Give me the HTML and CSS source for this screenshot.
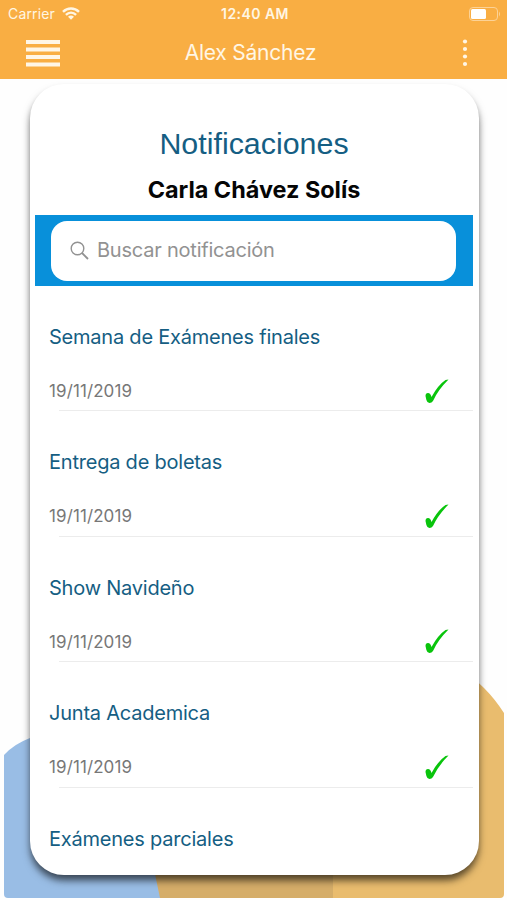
FILE: index.html
```
<!DOCTYPE html>
<html lang="es">
<head>
<meta charset="utf-8">
<title>Notificaciones</title>
<link rel="stylesheet" href="styles.css">
</head>
<body>
<header class="header">
  <div class="status">
    <div class="carrier"><span>Carrier</span>
      <svg class="wifi" width="18" height="13" viewBox="0 0 18 13" fill="none" stroke="#fff6e4" stroke-width="2.4"><path d="M1 4.800C5.500.3 12.500.3 17 4.800M3.900 7.900C6.900 5 11.100 5 14.100 7.900"/><path d="M6 9.800Q9 7.200 12 9.800L9 12.800Z" fill="#fff6e4" stroke="none"/></svg>
    </div>
    <span class="clock">12:40 AM</span>
    <svg class="battery" width="32" height="14" viewBox="0 0 32 14"><rect x=".5" y=".5" width="28" height="13" rx="3.500" fill="none" stroke="#fcd296"/><rect x="2" y="2" width="15" height="10" rx="1.500" fill="#fff"/><path d="M30 4.500Q32 7 30 9.500Z" fill="#fcd296"/></svg>
  </div>
  <nav class="nav">
    <svg class="menu" width="34" height="27" viewBox="0 0 34 27" fill="#fff6e6"><path d="M0 0h34v4H0zM0 7.500h34v4H0zM0 15h34v4H0zM0 22.500h34v4H0z"/></svg>
    <span class="user">Alex Sánchez</span>
    <svg class="more" width="6" height="28" viewBox="0 0 6 28" fill="#fff6e6"><circle cx="3" cy="2.500" r="2.100"/><circle cx="3" cy="10" r="2.100"/><circle cx="3" cy="17.500" r="2.100"/><circle cx="3" cy="25" r="2.100"/></svg>
  </nav>
</header>
<main class="page">
  <svg class="backdrop" width="507" height="821" viewBox="0 79 507 821"><path d="M4 755Q14 744 30 738L160 710V898H8Q4 898 4 894Z" fill="#99bde5"/><path d="M150 850L160 898H340V850Z" fill="#d5ad69"/><path d="M333 850H460V669Q486 685 504 713V894Q504 898 500 898H333Z" fill="#e9bc6e"/></svg>
  <section class="card">
    <h1 class="title">Notificaciones</h1>
    <h2 class="student">Carla Chávez Solís</h2>
    <div class="search">
      <div class="field"><svg class="glass" width="19" height="19" viewBox="0 0 19 19" fill="none" stroke="#929292" stroke-width="1.400"><circle cx="7.500" cy="7.500" r="6.300"/><path d="M12 12L18 18" stroke-width="1.800"/></svg><span class="hint">Buscar notificación</span></div>
    </div>
    <ul class="list">
      <li class="item"><span class="subject">Semana de Exámenes finales</span><div class="meta"><span>19/11/2019</span><svg class="check" width="24" height="25" viewBox="0 0 24 25"><path d="M.5 17Q.5 14 3 14Q5.500 14 6.500 18Q13 6 20.500 1L23.500.6Q13 11 8 22Q6.800 24 4.400 24Q2.200 24 1.400 21Z" fill="#09c40c"/></svg></div></li>
      <li class="item"><span class="subject">Entrega de boletas</span><div class="meta"><span>19/11/2019</span><svg class="check" width="24" height="25" viewBox="0 0 24 25"><path d="M.5 17Q.5 14 3 14Q5.500 14 6.500 18Q13 6 20.500 1L23.500.6Q13 11 8 22Q6.800 24 4.400 24Q2.200 24 1.400 21Z" fill="#09c40c"/></svg></div></li>
      <li class="item"><span class="subject">Show Navideño</span><div class="meta"><span>19/11/2019</span><svg class="check" width="24" height="25" viewBox="0 0 24 25"><path d="M.5 17Q.5 14 3 14Q5.500 14 6.500 18Q13 6 20.500 1L23.500.6Q13 11 8 22Q6.800 24 4.400 24Q2.200 24 1.400 21Z" fill="#09c40c"/></svg></div></li>
      <li class="item"><span class="subject">Junta Academica</span><div class="meta"><span>19/11/2019</span><svg class="check" width="24" height="25" viewBox="0 0 24 25"><path d="M.5 17Q.5 14 3 14Q5.500 14 6.500 18Q13 6 20.500 1L23.500.6Q13 11 8 22Q6.800 24 4.400 24Q2.200 24 1.400 21Z" fill="#09c40c"/></svg></div></li>
      <li class="item last"><span class="subject">Exámenes parciales</span></li>
    </ul>
  </section>
</main>
</body>
</html>
```

FILE: styles.css
```
* { box-sizing: border-box; }
body { margin: 0; height: 900px; overflow: hidden; background: #fefefe; font-family: Inter, "Liberation Sans", sans-serif; }
svg { display: block; flex: none; }
.header { height: 79px; background: #f9ae43; color: #fff6e4; }
.status { height: 27px; display: grid; grid-template-columns: 1fr auto 1fr; align-items: center; padding: 0 6px 0 8px; font-size: 14px; }
.carrier { display: flex; gap: 7px; align-items: center; letter-spacing: .15px; }
.clock { font-weight: 600; font-size: 14px; letter-spacing: .45px; padding-left: 1px; }
.battery { justify-self: end; }
.nav { height: 52px; display: grid; grid-template-columns: 1fr auto 1fr; align-items: center; padding: 0 39px 0 26px; }
.user { font-size: 21px; letter-spacing: -.22px; padding-left: 7px; margin-top: -2px; }
.more { justify-self: end; }
.page { position: relative; height: 821px; padding: 5px 28px 25px 30px; }
.backdrop { position: absolute; left: 0; top: 0; }
.card { position: relative; height: 791px; overflow: hidden; border-radius: 34px; background: #fff; box-shadow: 0 6px 8px -1px rgba(0,0,0,.6), 0 5px 5px rgba(0,0,0,.12); padding: 41px 6px 0 5px; }
.title { margin: 0; height: 36px; text-align: center; font: 400 30.4px/36px "Liberation Sans", Arial, sans-serif; color: #155e83; }
.student { margin: 11px 0 0; height: 36px; text-align: center; font-size: 23.4px; line-height: 36px; font-weight: 700; color: #050505; }
.search { height: 71px; margin-top: 7px; padding: 6px 17px 5px 16px; background: #0890da; }
.field { height: 60px; border-radius: 16px; background: #fff; display: flex; align-items: center; gap: 8px; padding-left: 19px; font-size: 20px; color: #929292; }
.glass, .hint { margin-top: -2px; }
.hint { letter-spacing: -.22px; }
.list { list-style: none; margin: 0; padding: 0; }
.item { height: 125.4px; padding: 36px 24px 0 14px; background: linear-gradient(#ececec, #ececec) right bottom / calc(100% - 24px) 1px no-repeat; }
.last { background: none; }
.subject { display: block; height: 30px; line-height: 30px; font-size: 20px; letter-spacing: -.22px; color: #155e83; white-space: nowrap; }
.meta { display: flex; justify-content: space-between; align-items: center; height: 30px; margin-top: 24px; font-size: 17px; letter-spacing: .1px; color: #777; }
```
